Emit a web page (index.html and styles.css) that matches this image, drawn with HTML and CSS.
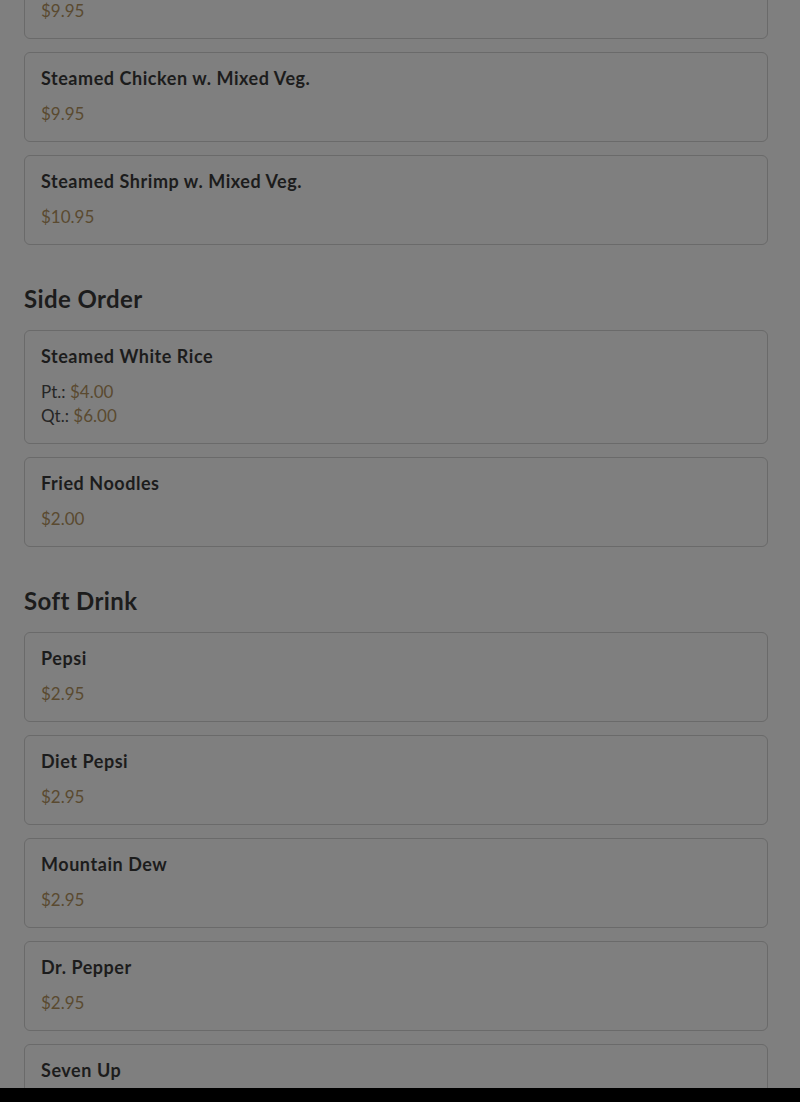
FILE: index.html
```html
<!DOCTYPE html>
<html lang="en">
<head>
  <meta charset="UTF-8">
  <meta name="viewport" content="width=device-width, initial-scale=1.0">
  <title>Menu</title>
  <link rel="stylesheet" href="styles.css">
</head>
<body>
  <div class="menu">
    <div class="item">
      <h3>Steamed Broccoli w. Mixed Veg.</h3>
      <p class="price">$9.95</p>
    </div>
    <div class="item">
      <h3>Steamed Chicken w. Mixed Veg.</h3>
      <p class="price">$9.95</p>
    </div>
    <div class="item">
      <h3>Steamed Shrimp w. Mixed Veg.</h3>
      <p class="price">$10.95</p>
    </div>

    <h2 class="section">Side Order</h2>
    <div class="item">
      <h3>Steamed White Rice</h3>
      <p class="size">Pt.: <span class="price">$4.00</span></p>
      <p class="size">Qt.: <span class="price">$6.00</span></p>
    </div>
    <div class="item">
      <h3>Fried Noodles</h3>
      <p class="price">$2.00</p>
    </div>

    <h2 class="section">Soft Drink</h2>
    <div class="item">
      <h3>Pepsi</h3>
      <p class="price">$2.95</p>
    </div>
    <div class="item">
      <h3>Diet Pepsi</h3>
      <p class="price">$2.95</p>
    </div>
    <div class="item">
      <h3>Mountain Dew</h3>
      <p class="price">$2.95</p>
    </div>
    <div class="item">
      <h3>Dr. Pepper</h3>
      <p class="price">$2.95</p>
    </div>
    <div class="item">
      <h3>Seven Up</h3>
      <p class="price">$2.95</p>
    </div>
  </div>
  <div class="bottom-bar"></div>
</body>
</html>
```
FILE: styles.css
```css
body {
  font-family: Lato, "Noto Sans", sans-serif;
  background-color: #7f7f7f;
  margin: 0;
  padding: 0;
  height: 1102px;
  overflow: hidden;
}
.menu {
  display: flex;
  flex-direction: column;
  gap: 13px;
  padding: 0 32px 0 24px;
  margin-top: -51px;
}
.item {
  border: 1px solid #6a6a6a;
  border-radius: 6px;
  padding: 12px 16px 15px;
  background-color: #7f7f7f;
}
.item h3 {
  margin: 0 0 11px;
  font-size: 18px;
  line-height: 26px;
  font-weight: 700;
  letter-spacing: 0.55px;
  color: #1c1c1c;
}
.item p {
  margin: 0;
  font-size: 17px;
  line-height: 24px;
}
.price {
  color: #5a4a30;
}
.size {
  color: #262626;
}
.section {
  margin: 25px 0 2px;
  font-size: 24px;
  line-height: 32px;
  font-weight: 700;
  letter-spacing: 0.4px;
  color: #1c1c1c;
}
.bottom-bar {
  position: fixed;
  left: 0;
  right: 0;
  bottom: 0;
  height: 14px;
  background-color: #000;
}
```
